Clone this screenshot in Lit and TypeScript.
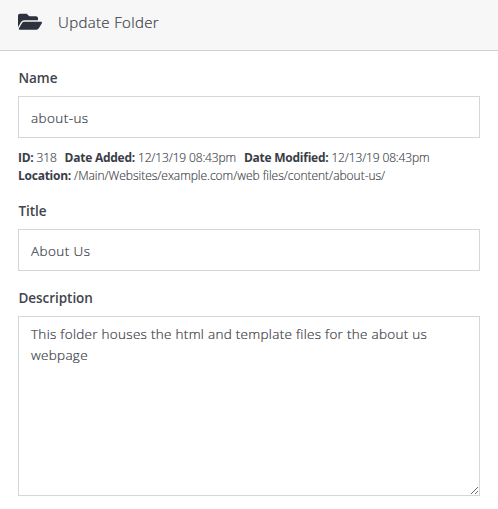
import { LitElement, html, css } from "lit";
import { customElement } from "lit/decorators.js";

@customElement("app-root")
export class AppRoot extends LitElement {
  static styles = css`
    :host {
      display: block;
      height: 509px;
      overflow: hidden;
      background: #fff;
      color: #3b3e47;
      font-family: "Open Sans", "Noto Sans", sans-serif;
      font-size: 14px;
    }
    * { box-sizing: border-box; }
    .header {
      display: flex;
      align-items: center;
      height: 51px;
      padding: 0 18px 7px;
      background: #f7f7f7;
      border-bottom: 1px solid #d2d2d2;
    }
    .icon { width: 24px; height: 21.33px; margin-right: 16px; fill: #2d323e; }
    .heading { margin: 0; font-size: 15px; font-weight: 300; letter-spacing: 0.35px; line-height: 20px; -webkit-text-stroke: 0.2px; }
    .form { padding: 17px 18px 0; }
    .label {
      display: block;
      height: 20px;
      line-height: 20px;
      padding-left: 0.5px;
      font-size: 13.5px;
      font-weight: 600;
      letter-spacing: -0.05px;
      color: #41444d;
    }
    .control {
      display: block;
      width: 100%;
      margin: 8px 0 0;
      padding: 0 12px;
      border: 1px solid #d6d6d6;
      border-radius: 0;
      outline: none;
      background: #fff;
      color: #3b3e47;
      font: 300 13.5px/21px "Open Sans", "Noto Sans", sans-serif;
      letter-spacing: 0.29px;
      -webkit-text-stroke: 0.2px;
    }
    .input { height: 42px; padding-top: 2px; letter-spacing: 0.42px; }
    .area { height: 180px; padding-top: 7px; resize: vertical; overflow: hidden; }
    .meta { margin: 11px 0 16px; font-size: 12px; font-weight: 300; line-height: 18px; letter-spacing: -0.15px; white-space: nowrap; -webkit-text-stroke: 0.15px; }
    .line { display: flex; gap: 8px; }
    .path { letter-spacing: -0.03px; }
    .key { font-weight: 700; color: #3a3d46; letter-spacing: -0.25px; -webkit-text-stroke: 0; }
    .gap { margin-top: 17px; }
  `;

  render() {
    return html`
      <header class="header">
        <svg class="icon" viewBox="0 0 576 512" aria-hidden="true">
          <path d="M572.694 292.093L500.27 416.248A63.997 63.997 0 0 1 444.989 448H45.025c-18.523 0-30.064-20.093-20.731-36.093l72.424-124.155A64 64 0 0 1 152 256h399.964c18.523 0 30.064 20.093 20.73 36.093zM152 224h328v-48c0-26.51-21.49-48-48-48H272l-64-64H48C21.49 64 0 85.49 0 112v278.046l69.077-118.418C86.214 242.25 117.989 224 152 224z" />
        </svg>
        <h1 class="heading">Update Folder</h1>
      </header>
      <main class="form">
        <label class="label" for="name">Name</label>
        <input class="control input" id="name" .value=${"about-us"} />
        <div class="meta">
          <div class="line">
            <span><span class="key">ID:</span> 318</span>
            <span><span class="key">Date Added:</span> 12/13/19 08:43pm</span>
            <span><span class="key">Date Modified:</span> 12/13/19 08:43pm</span>
          </div>
          <div class="line path">
            <span><span class="key">Location:</span> /Main/Websites/example.com/web files/content/about-us/</span>
          </div>
        </div>
        <label class="label" for="title">Title</label>
        <input class="control input" id="title" .value=${"About Us"} />
        <label class="label gap" for="description">Description</label>
        <textarea class="control area" id="description" spellcheck="false" .value=${"This folder houses the html and template files for the about us webpage"}></textarea>
      </main>
    `;
  }
}
